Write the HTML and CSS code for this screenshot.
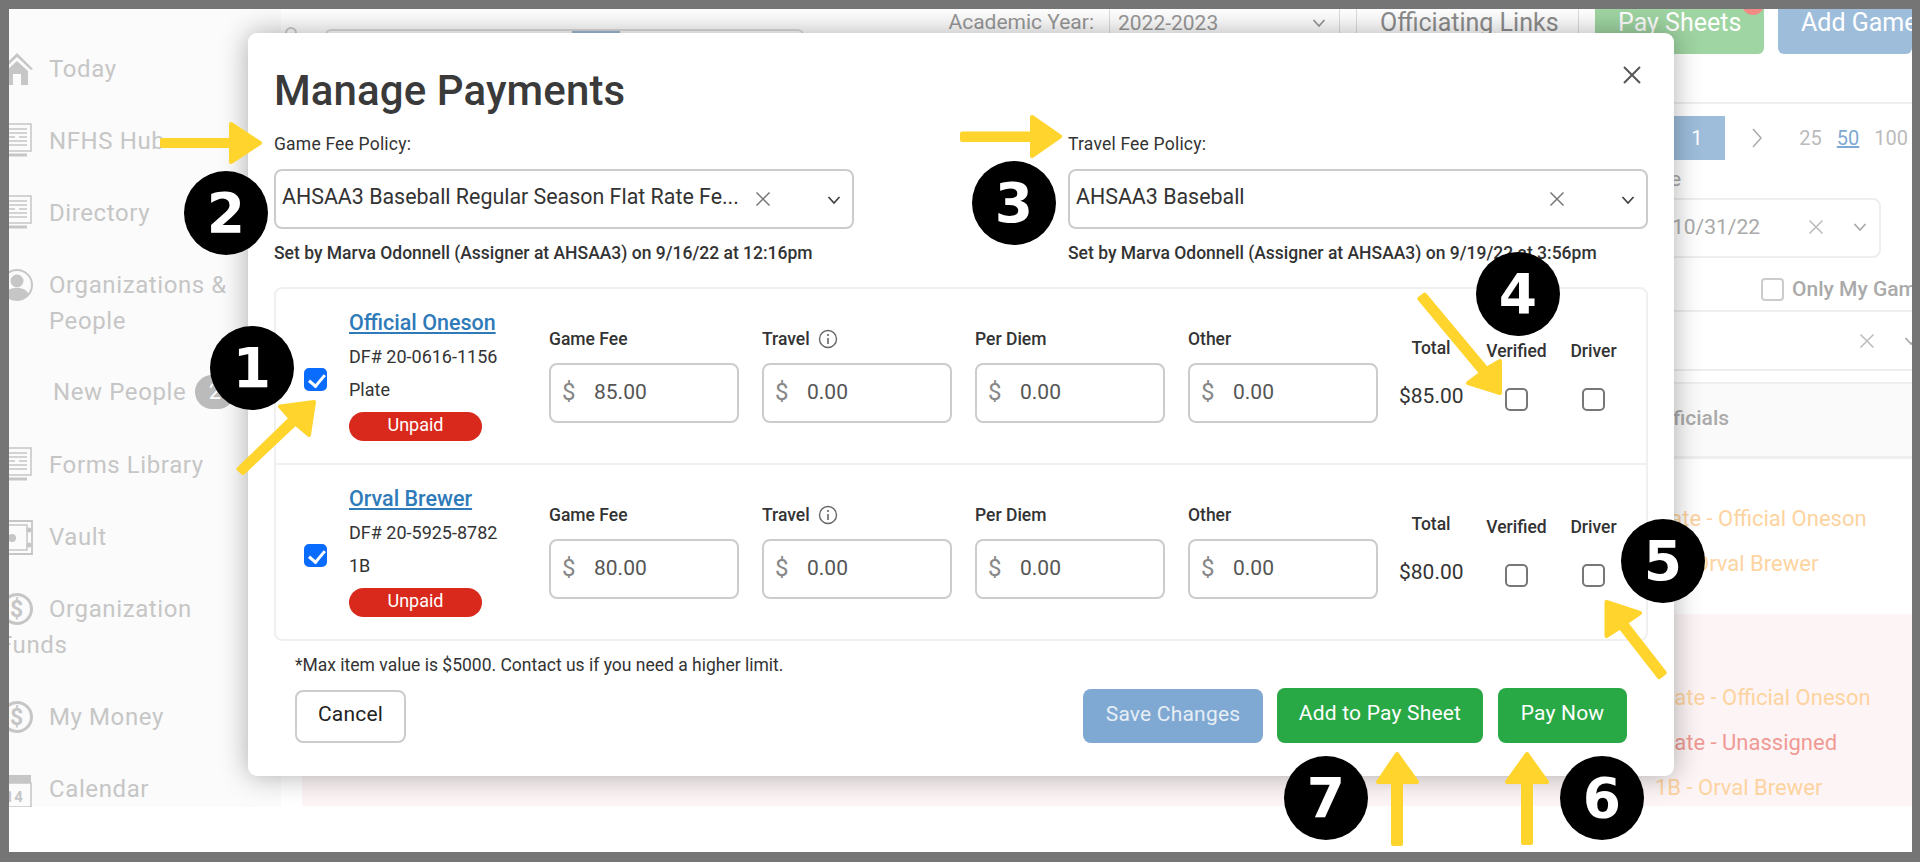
FILE: index.html
```html
<!DOCTYPE html>
<html lang="en">
<head>
    <meta charset="UTF-8">
    <title>Manage Payments</title>
    <link rel="stylesheet" href="styles.css">
</head>
<body>
<svg class="defs" width="0" height="0">
    <symbol id="i-doc" viewBox="0 0 34 36">
        <path d="M3 1h28v27H3z" fill="none" stroke="currentColor" stroke-width="1.5"/>
        <path d="M7 6h20M7 10h20M7 14h8M19 14h8M7 18h20M7 22h20" stroke="currentColor" stroke-width="1.5"/>
        <path d="M3 32h24" stroke="currentColor" stroke-width="3"/>
    </symbol>
    <symbol id="i-dollar" viewBox="0 0 34 34">
        <circle cx="17" cy="17" r="14.5" fill="none" stroke="currentColor" stroke-width="3"/>
        <text x="17" y="25" text-anchor="middle" class="icon-dollar">$</text>
    </symbol>
    <symbol id="i-x" viewBox="0 0 16 16">
        <path d="M1.500 1.500l13 13M14.500 1.500l-13 13" fill="none" stroke="currentColor" stroke-width="1.500"/>
    </symbol>
    <symbol id="i-down" viewBox="0 0 14 10">
        <path d="M1.500 2l5.500 6 5.500-6" fill="none" stroke="currentColor" stroke-width="1.800"/>
    </symbol>
    <symbol id="i-info" viewBox="0 0 20 20">
        <circle cx="10" cy="10" r="8.500" fill="none" stroke="currentColor" stroke-width="1.400"/>
        <path d="M10 9v6" stroke="currentColor" stroke-width="1.600"/>
        <circle cx="10" cy="6" r="1.100" fill="currentColor"/>
    </symbol>
</svg>

<div class="frame">
    <div class="page">
        <nav class="sidebar">
            <div class="nav-item">
                <svg class="nav-icon" viewBox="0 0 34 36"><path d="M17 2L1 18l2 1 14-13 14 13 2-1zM6 20l11-10 11 10v14h-7V23h-8v11H6z" fill="currentColor"/></svg>
                <span>Today</span>
            </div>
            <div class="nav-item"><svg class="nav-icon"><use href="#i-doc"/></svg><span>NFHS Hub</span></div>
            <div class="nav-item"><svg class="nav-icon"><use href="#i-doc"/></svg><span>Directory</span></div>
            <div class="nav-item">
                <svg class="nav-icon" viewBox="0 0 34 34"><circle cx="17" cy="17" r="15" fill="none" stroke="currentColor" stroke-width="2"/><circle cx="17" cy="13" r="6.500" fill="currentColor"/><path d="M5 27c2-6 7-7 12-7s10 1 12 7c-3 3-7 5-12 5s-9-2-12-5z" fill="currentColor"/></svg>
                <span>Organizations &amp;<br>People</span>
            </div>
            <div class="nav-item nav-sub"><span>New People</span><span class="nav-count">2</span></div>
            <div class="nav-item"><svg class="nav-icon"><use href="#i-doc"/></svg><span>Forms Library</span></div>
            <div class="nav-item">
                <svg class="nav-icon" viewBox="0 0 34 36"><path d="M3 2h29v33H3z" fill="none" stroke="currentColor" stroke-width="1.800"/><path d="M3 6h24v25H3z" fill="none" stroke="currentColor" stroke-width="1.500"/><circle cx="12" cy="19" r="4" fill="currentColor"/><circle cx="29" cy="11" r="2.500" fill="currentColor"/><circle cx="29" cy="26" r="2.500" fill="currentColor"/></svg>
                <span>Vault</span>
            </div>
            <div class="nav-item"><svg class="nav-icon"><use href="#i-dollar"/></svg><span>Organization<br><span class="nav-wrap">Funds</span></span></div>
            <div class="nav-item"><svg class="nav-icon"><use href="#i-dollar"/></svg><span>My Money</span></div>
            <div class="nav-item">
                <svg class="nav-icon" viewBox="0 0 34 36"><path d="M3 4h28v8H3z" fill="currentColor"/><path d="M3 12h28v24H3z" fill="none" stroke="currentColor" stroke-width="1.500"/><text x="5" y="31" class="icon-date">14</text></svg>
                <span>Calendar</span>
            </div>
        </nav>

        <main class="main">
            <div class="topbar">
                <div class="search-dot"></div>
                <div class="search-box"><span class="search-on"></span></div>
                <div class="year-label">Academic Year:</div>
                <div class="year-select">2022-2023<svg class="chev"><use href="#i-down"/></svg></div>
                <div class="links">Officiating Links</div>
                <div class="top-btn top-pay">Pay Sheets<span class="dot"></span></div>
                <div class="top-btn top-add">Add Game</div>
            </div>
            <div class="pager">
                <span class="page-num">1</span>
                <svg class="pager-next" viewBox="0 0 12 22"><path d="M2 2l8 9-8 9" fill="none" stroke="currentColor" stroke-width="1.500"/></svg>
                <span>25</span><span class="page-on">50</span><span>100</span>
            </div>
            <div class="filters">
                <div class="filter-label">Date</div>
                <div class="date-box">
                    <span class="date-val">10/31/22</span>
                    <svg class="date-x"><use href="#i-x"/></svg>
                    <svg class="chev"><use href="#i-down"/></svg>
                </div>
                <label class="only-mine"><span class="box-faded"></span>Only My Games</label>
            </div>
            <div class="filter-row">
                <svg class="date-x"><use href="#i-x"/></svg>
                <svg class="chev"><use href="#i-down"/></svg>
            </div>
            <div class="tab-row">Officials</div>
            <div class="games">
                <div class="a-line a-first">Plate - Official Oneson</div>
                <div class="a-line a-second">1B - Orval Brewer</div>
            </div>
            <div class="games games-alert">
                <div class="a-line">Plate - Official Oneson</div>
                <div class="a-line a-red">Plate - Unassigned</div>
                <div class="a-line">1B - Orval Brewer</div>
            </div>
        </main>
    </div>
    <div class="strip"></div>

    <section class="modal">
        <svg class="modal-close" viewBox="0 0 20 20"><path d="M2 2l16 16M18 2L2 18" fill="none" stroke="currentColor" stroke-width="2"/></svg>
        <h1>Manage Payments</h1>

        <div class="policies">
            <div>
                <div class="policy-label">Game Fee Policy:</div>
                <div class="select">
                    <span class="select-text">AHSAA3 Baseball Regular Season Flat Rate Fe...</span>
                    <svg class="select-x"><use href="#i-x"/></svg>
                    <svg class="select-down"><use href="#i-down"/></svg>
                </div>
                <div class="policy-note">Set by Marva Odonnell (Assigner at AHSAA3) on 9/16/22 at 12:16pm</div>
            </div>
            <div>
                <div class="policy-label">Travel Fee Policy:</div>
                <div class="select">
                    <span class="select-text">AHSAA3 Baseball</span>
                    <svg class="select-x"><use href="#i-x"/></svg>
                    <svg class="select-down"><use href="#i-down"/></svg>
                </div>
                <div class="policy-note">Set by Marva Odonnell (Assigner at AHSAA3) on 9/19/22 at 3:56pm</div>
            </div>
        </div>

        <div class="crew">
            <div class="crew-row">
                <div class="pick"><input class="check" type="checkbox" checked></div>
                <div class="person">
                    <a class="person-name" href="#">Official Oneson</a>
                    <div class="person-df">DF# 20-0616-1156</div>
                    <div class="person-pos">Plate</div>
                    <div class="status">Unpaid</div>
                </div>
                <div class="fees">
                    <div class="fee"><div class="fee-label">Game Fee</div><div class="money"><span class="cur">$</span><input value="85.00"></div></div>
                    <div class="fee"><div class="fee-label">Travel <svg class="info"><use href="#i-info"/></svg></div><div class="money"><span class="cur">$</span><input value="0.00"></div></div>
                    <div class="fee"><div class="fee-label">Per Diem</div><div class="money"><span class="cur">$</span><input value="0.00"></div></div>
                    <div class="fee"><div class="fee-label">Other</div><div class="money"><span class="cur">$</span><input value="0.00"></div></div>
                </div>
                <div class="total"><div class="total-label">Total</div><div class="total-val">$85.00</div></div>
                <div class="flag"><div class="flag-label">Verified</div><input class="check" type="checkbox"></div>
                <div class="flag"><div class="flag-label">Driver</div><input class="check" type="checkbox"></div>
            </div>
            <div class="crew-row">
                <div class="pick"><input class="check" type="checkbox" checked></div>
                <div class="person">
                    <a class="person-name" href="#">Orval Brewer</a>
                    <div class="person-df">DF# 20-5925-8782</div>
                    <div class="person-pos">1B</div>
                    <div class="status">Unpaid</div>
                </div>
                <div class="fees">
                    <div class="fee"><div class="fee-label">Game Fee</div><div class="money"><span class="cur">$</span><input value="80.00"></div></div>
                    <div class="fee"><div class="fee-label">Travel <svg class="info"><use href="#i-info"/></svg></div><div class="money"><span class="cur">$</span><input value="0.00"></div></div>
                    <div class="fee"><div class="fee-label">Per Diem</div><div class="money"><span class="cur">$</span><input value="0.00"></div></div>
                    <div class="fee"><div class="fee-label">Other</div><div class="money"><span class="cur">$</span><input value="0.00"></div></div>
                </div>
                <div class="total"><div class="total-label">Total</div><div class="total-val">$80.00</div></div>
                <div class="flag"><div class="flag-label">Verified</div><input class="check" type="checkbox"></div>
                <div class="flag"><div class="flag-label">Driver</div><input class="check" type="checkbox"></div>
            </div>
        </div>

        <div class="limit">*Max item value is $5000. Contact us if you need a higher limit.</div>

        <div class="actions">
            <button class="btn btn-cancel">Cancel</button>
            <button class="btn btn-save">Save Changes</button>
            <button class="btn btn-go btn-sheet">Add to Pay Sheet</button>
            <button class="btn btn-go btn-now">Pay Now</button>
        </div>
    </section>

    <!-- tutorial arrows drawn over the screenshot, coordinates are window pixels -->
    <svg class="arrows" viewBox="0 0 1920 862">
        <g fill="#ffd42c" stroke="#ffd42c" stroke-width="4" stroke-linejoin="round">
            <path d="M162 140H231V124L260 143L231 162V146H162z"/>
            <path d="M962 133.500H1032V117L1060 136.500L1032 156V140H962z"/>
            <path d="M238.500 469L290.600 418.500L280 406.500L314 402L309 435L295.400 423.500L243 473z"/>
            <path d="M1424.700 294.500L1486.700 368.800L1500 361V393L1468 383L1481.300 373.200L1419.300 298.700z"/>
            <path d="M1664.800 672.800L1625.800 622.800L1640 613L1606.500 602V636L1620.200 627.200L1659.200 677.200z"/>
            <path d="M1393 844V782H1378L1397 754L1417 782H1401V844z"/>
            <path d="M1523 843V782H1507L1527 754L1547 782H1531V843z"/>
        </g>
    </svg>
    <div class="step step-1">1</div>
    <div class="step step-2">2</div>
    <div class="step step-3">3</div>
    <div class="step step-4">4</div>
    <div class="step step-5">5</div>
    <div class="step step-6">6</div>
    <div class="step step-7">7</div>
</div>
</body>
</html>
```

FILE: styles.css
```css
* {
    box-sizing: border-box;
}
body {
    margin: 0;
    background: #757575;
    font-family: Roboto, "Liberation Sans", sans-serif;
    color: #333;
}
.defs {
    position: absolute;
}
.frame {
    position: relative;
    width: 1920px;
    height: 862px;
    border-style: solid;
    border-color: #757575;
    border-width: 9px 8px 10px 9px;
    background: white;
    overflow: hidden;
}
.page {
    display: flex;
    gap: 21px;
    height: 798px;
    overflow: hidden;
}
.strip {
    position: relative;
    z-index: 2;
    height: 45px;
    background: white;
}

/* faded page behind the dialog */
.sidebar {
    flex: none;
    display: flex;
    flex-direction: column;
    gap: 36px;
    width: 272px;
    padding-top: 42px;
    background: #fbfbfb;
    color: #c6c6c6;
    font-size: 24px;
    line-height: 36px;
    letter-spacing: 0.6px;
}
.nav-item {
    display: flex;
    align-items: flex-start;
    gap: 15px;
}
.nav-icon {
    flex: none;
    width: 34px;
    height: 36px;
    margin-left: -9px;
}
.nav-sub {
    padding-left: 44px;
    align-items: center;
    margin: -1px 0 1px;
}
.nav-wrap {
    margin-left: -50px;
}
.nav-count {
    width: 40px;
    height: 34px;
    margin-left: -6px;
    border-radius: 17px;
    background: #bbb;
    color: white;
    font-size: 22px;
    line-height: 34px;
    text-align: center;
}
.icon-dollar {
    font: bold 23px Roboto, sans-serif;
    fill: currentColor;
}
.icon-date {
    font: bold 15px Roboto, sans-serif;
    fill: currentColor;
}
.main {
    flex: 1;
    display: flex;
    flex-direction: column;
    min-width: 0;
    background: white;
    color: #aaa;
}
.topbar {
    flex: none;
    display: flex;
    height: 95px;
    border-bottom: 2px solid #eee;
    font-size: 25px;
    line-height: 28px;
    color: #999;
}
.search-dot {
    width: 12px;
    height: 12px;
    margin: 18px 0 0 -17px;
    border: 2px solid #ccc;
    border-radius: 50%;
}
.search-box {
    position: relative;
    width: 479px;
    height: 40px;
    margin: 20px 0 0 28px;
    border: 2px solid #ddd;
    border-radius: 6px;
}
.search-on {
    position: absolute;
    top: 0;
    left: 245px;
    width: 48px;
    height: 30px;
    background: #9dbddb;
}
.year-label {
    margin-left: auto;
    font-size: 21px;
    margin-top: -1px;
}
.year-select {
    display: flex;
    justify-content: space-between;
    align-items: center;
    width: 231px;
    height: 28px;
    margin-left: 15px;
    padding: 0 13px 0 8px;
    border-left: 1px solid #ddd;
    border-right: 1px solid #ddd;
    font-size: 21px;
}
.chev {
    flex: none;
    width: 14px;
    height: 10px;
}
.links {
    width: 223px;
    height: 28px;
    margin-left: 16px;
    padding-left: 23px;
    border-left: 1px solid #ddd;
    border-right: 1px solid #ddd;
    color: #8d8d8d;
}
.top-btn {
    position: relative;
    height: 45px;
    border-radius: 0 0 6px 6px;
    color: white;
}
.top-pay {
    width: 169px;
    margin-left: 16px;
    background: #9fd5a2;
    padding-left: 23px;
}
.top-add {
    width: 134px;
    margin-left: 14px;
    padding-left: 23px;
    background: #9dbddb;
    white-space: nowrap;
    overflow: hidden;
}
.dot {
    position: absolute;
    top: -8px;
    right: 0;
    width: 22px;
    height: 14px;
    border-radius: 0 0 11px 11px;
    background: #f08c85;
}
.pager {
    flex: none;
    display: flex;
    justify-content: flex-end;
    align-items: center;
    height: 44px;
    margin-top: 12px;
    padding-right: 4px;
    font-size: 20px;
    color: #bbb;
}
.page-num {
    width: 66px;
    height: 44px;
    margin-right: 26px;
    padding-left: 32px;
    background: #9dbddb;
    color: white;
    line-height: 44px;
}
.pager-next {
    width: 12px;
    height: 22px;
    margin-right: 36px;
    color: #aaa;
}
.page-on {
    margin: 0 15px;
    color: #7fa9d2;
    text-decoration: underline;
}
.filters {
    flex: none;
    display: flex;
    flex-direction: column;
    align-items: flex-end;
    height: 150px;
}
.filter-label {
    width: 274px;
    height: 38px;
    padding-top: 4px;
    font-size: 21px;
    line-height: 30px;
}
.date-box {
    display: flex;
    align-items: center;
    width: 241px;
    height: 60px;
    margin-right: 31px;
    padding: 0 12px 2px 30px;
    border: 2px solid #eee;
    border-radius: 8px;
    color: #aaa;
    font-size: 21px;
}
.date-val {
    width: 138px;
}
.date-x {
    flex: none;
    width: 16px;
    height: 16px;
    margin-right: 29px;
    color: #bbb;
}
.only-mine {
    display: flex;
    align-items: center;
    gap: 8px;
    width: 151px;
    height: 24px;
    margin-top: 19px;
    font-size: 21px;
    font-weight: 500;
    color: #aaa;
    white-space: nowrap;
    overflow: hidden;
}
.box-faded {
    flex: none;
    width: 23px;
    height: 23px;
    border: 2px solid #ccc;
    border-radius: 4px;
}
.filter-row {
    flex: none;
    display: flex;
    justify-content: flex-end;
    align-items: center;
    height: 61px;
    margin-right: -6px;
    border-top: 2px solid #eee;
    border-bottom: 2px solid #eee;
}
.tab-row {
    flex: none;
    height: 77px;
    margin-top: 11px;
    padding: 19px 0 0 1350px;
    border-top: 2px solid #eee;
    border-bottom: 3px solid #eee;
    background: #fafafa;
    font-size: 21px;
    font-weight: 500;
    line-height: 30px;
}
.games {
    flex: none;
    height: 140px;
    margin-top: 15px;
    padding: 31px 0 0 1349px;
    font-size: 22px;
    line-height: 28px;
    color: #fdd3a0;
}
.a-line {
    margin-bottom: 17px;
}
.games-alert {
    height: 192px;
    margin-top: 0;
    padding: 70px 0 0 1353px;
    background: #fdf5f5;
}
.a-red {
    color: #f09a95;
}

/* dialog */
.modal {
    position: absolute;
    z-index: 1;
    top: 24px;
    left: 239px;
    width: 1426px;
    height: 743px;
    padding: 23px 26px 33px;
    border-radius: 9px;
    background: white;
    box-shadow: 0 0 28px rgba(0, 0, 0, 0.32);
}
.modal h1 {
    margin: 0 0 7px;
    font-size: 42px;
    font-weight: 500;
    line-height: 69px;
    letter-spacing: 0.1px;
    color: #3a3a3a;
}
.modal-close {
    position: absolute;
    top: 32px;
    right: 32px;
    width: 20px;
    height: 20px;
    color: #555;
}
.policies {
    display: grid;
    grid-template-columns: 580px 580px;
    gap: 214px;
}
.policy-label,
.policy-note {
    font-size: 17.500px;
    line-height: 24px;
}
.policy-label {
    letter-spacing: 0.2px;
}
.policy-note {
    margin-top: 12px;
    font-weight: 500;
}
.select {
    position: relative;
    display: flex;
    align-items: flex-start;
    height: 60px;
    margin-top: 13px;
    padding: 12px 0 0 6px;
    border: 2px solid #ccc;
    border-radius: 8px;
}
.select-text {
    font-size: 21.400px;
    line-height: 28px;
}
.select-x {
    position: absolute;
    top: 20px;
    right: 81px;
    width: 16px;
    height: 16px;
    color: #777;
}
.select-down {
    position: absolute;
    top: 24px;
    right: 11px;
    width: 14px;
    height: 10px;
    color: #444;
}
.crew {
    height: 354px;
    margin-top: 22px;
    border: 2px solid #f0f0f0;
    border-radius: 8px;
}
.crew-row {
    display: flex;
    align-items: flex-start;
    height: 176px;
    border-bottom: 2px solid #f0f0f0;
}
.crew-row:last-child {
    border-bottom: none;
}
.pick {
    flex: none;
    width: 73px;
    padding: 79px 0 0 28px;
}
.check {
    appearance: none;
    display: block;
    position: relative;
    width: 23px;
    height: 23px;
    margin: 0;
    border: 2px solid #777;
    border-radius: 5px;
    background: white;
}
.check:checked {
    border-color: #0a6cff;
    background: #0a6cff;
}
.check:checked::after {
    content: "";
    position: absolute;
    top: 1px;
    left: 6px;
    width: 7px;
    height: 13px;
    border: solid white;
    border-width: 0 3px 3px 0;
    transform: rotate(40deg);
}
.person {
    flex: none;
    width: 200px;
    padding-top: 19px;
}
.person-name {
    display: block;
    font-size: 21.500px;
    font-weight: 500;
    line-height: 30px;
    color: #2f7ab8;
}
.person-df,
.person-pos {
    font-size: 18px;
    line-height: 24px;
}
.person-df {
    margin-top: 7px;
}
.person-pos {
    margin-top: 9px;
}
.status {
    width: 133px;
    height: 29px;
    margin-top: 10px;
    border-radius: 15px;
    background: #d9291c;
    color: white;
    font-size: 18px;
    line-height: 26px;
    text-align: center;
}
.fees {
    flex: none;
    display: grid;
    grid-template-columns: repeat(4, 190px);
    gap: 23px;
    padding-top: 38px;
}
.fee-label {
    display: flex;
    align-items: center;
    gap: 8px;
    height: 24px;
    font-size: 17.500px;
    font-weight: 500;
}
.info {
    width: 20px;
    height: 20px;
    color: #666;
}
.money {
    display: flex;
    align-items: center;
    height: 60px;
    margin-top: 12px;
    padding: 0 10px 2px 11px;
    border: 2px solid #ccc;
    border-radius: 8px;
}
.cur {
    flex: none;
    width: 32px;
    font-size: 24px;
    color: #888;
}
.money input {
    width: 100%;
    padding: 0;
    border: none;
    outline: none;
    font: 21px Roboto, sans-serif;
    color: #555;
}
.total {
    flex: none;
    width: 64px;
    margin: 0 15px 0 21px;
    padding-top: 47px;
    text-align: center;
}
.total-label {
    font-size: 17.500px;
    font-weight: 500;
    line-height: 24px;
}
.total-val {
    margin-top: 24px;
    font-size: 21px;
    line-height: 24px;
}
.flag {
    flex: none;
    display: flex;
    flex-direction: column;
    align-items: center;
    gap: 25px;
    width: 77px;
    padding-top: 50px;
    font-size: 17.500px;
    font-weight: 500;
    line-height: 24px;
}
.limit {
    margin: 12px 0 0 21px;
    font-size: 17.500px;
    line-height: 24px;
}
.actions {
    display: flex;
    align-items: flex-start;
    margin: 11px 21px 0;
}
.btn {
    height: 55px;
    padding: 0 0 5px;
    border: none;
    border-radius: 8px;
    font: 400 21px Roboto, sans-serif;
    letter-spacing: 0.2px;
    color: white;
}
.btn-cancel {
    width: 111px;
    height: 53px;
    margin-top: 2px;
    margin-right: auto;
    border: 2px solid #ccc;
    background: white;
    color: #222;
}
.btn-save {
    width: 180px;
    height: 54px;
    margin-top: 1px;
    background: #7fa9d2;
    color: #e6eef6;
}
.btn-go {
    background: #29a846;
}
.btn-sheet {
    width: 206px;
    margin-left: 14px;
}
.btn-now {
    width: 129px;
    margin-left: 15px;
}

/* tutorial marks */
.arrows {
    position: absolute;
    z-index: 3;
    top: -9px;
    left: -9px;
    width: 1920px;
    height: 862px;
}
.step {
    position: absolute;
    z-index: 4;
    width: 84px;
    height: 84px;
    border-radius: 50%;
    background: black;
    color: white;
    font: bold 55px/84px "DejaVu Sans", sans-serif;
    text-align: center;
}
.step-1 { left: 201px; top: 317px; }
.step-2 { left: 175px; top: 162px; }
.step-3 { left: 963px; top: 152px; }
.step-4 { left: 1467px; top: 243px; }
.step-5 { left: 1612px; top: 510px; }
.step-6 { left: 1551px; top: 747px; }
.step-7 { left: 1275px; top: 747px; }
```
